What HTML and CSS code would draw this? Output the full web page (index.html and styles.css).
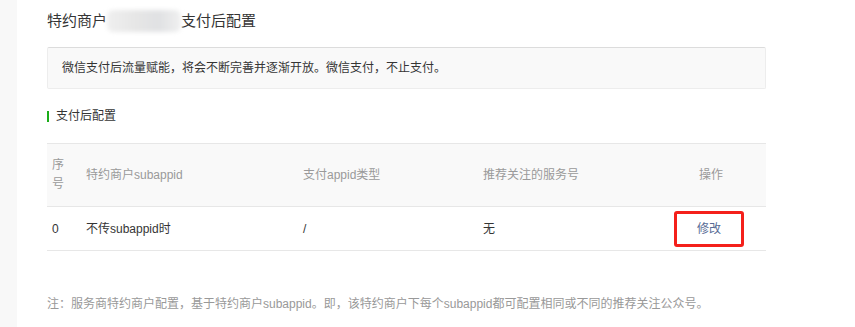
FILE: index.html
```html
<!DOCTYPE html>
<html lang="zh-CN">
<head>
  <meta charset="UTF-8" />
  <meta name="viewport" content="width=device-width, initial-scale=1.0"/>
  <title>支付后配置</title>
  <link rel="stylesheet" href="styles.css">
</head>
<body>
  <!-- left menu strip -->
  <aside class="side"></aside>

  <main class="content">
    <h2 class="page-title">特约商户<span class="masked"></span>支付后配置</h2>

    <div class="notice">微信支付后流量赋能，将会不断完善并逐渐开放。微信支付，不止支付。</div>

    <h3 class="section-title">支付后配置</h3>

    <table class="config-table">
      <thead>
        <tr>
          <th class="col-no">序号</th>
          <th class="col-sub">特约商户subappid</th>
          <th class="col-type">支付appid类型</th>
          <th class="col-follow">推荐关注的服务号</th>
          <th class="col-op">操作</th>
        </tr>
      </thead>
      <tbody>
        <tr>
          <td class="col-no">0</td>
          <td>不传subappid时</td>
          <td>/</td>
          <td>无</td>
          <td class="col-op"><a class="edit-link" href="#">修改</a></td>
        </tr>
      </tbody>
    </table>

    <p class="note">注：服务商特约商户配置，基于特约商户subappid。即，该特约商户下每个subappid都可配置相同或不同的推荐关注公众号。</p>
  </main>
</body>
</html>
```

FILE: styles.css
```css
body {
  margin: 0;
  font-family: "Liberation Sans", "Noto Sans CJK SC", sans-serif;
  font-size: 12px;
  color: #353535;
  background: #fff;
  display: flex;
  min-height: 100vh;
}

.side {
  width: 17px;
  flex-shrink: 0;
  background: #f8f8f8;
}

.content {
  padding-left: 30px;
  width: 719px;
}

.page-title {
  margin: 0 0 14px;
  padding-top: 9px;
  font-size: 15px;
  font-weight: normal;
  line-height: 24px;
  display: flex;
  align-items: center;
}

/* blurred merchant name */
.masked {
  display: inline-block;
  width: 74px;
  height: 22px;
  border-radius: 6px;
  background: linear-gradient(90deg, #efefef, #e6e6e6 40%, #e0e1e3 70%, #f0f0f0);
  filter: blur(2px);
}

.notice {
  background: #f9f9f9;
  border: 1px solid #ededed;
  border-top-color: #dcdcdc;
  border-radius: 2px;
  padding: 0 14px;
  line-height: 40px;
}

.section-title {
  margin: 19px 0 19px;
  font-size: 12px;
  font-weight: normal;
  line-height: 16px;
  display: flex;
  align-items: center;
}

.section-title::before {
  content: "";
  width: 2px;
  height: 11px;
  margin-right: 7px;
  background: #1aad19;
}

.config-table {
  width: 719px;
  border-collapse: collapse;
  table-layout: fixed;
}

.config-table th,
.config-table td {
  box-sizing: border-box;
  padding: 0 5px;
  text-align: left;
  font-weight: normal;
  border-top: 1px solid #e7e7e7;
  border-bottom: 1px solid #e7e7e7;
}

.config-table th {
  height: 63px;
  line-height: 19px;
  color: #9a9a9a;
  background: #f9f9f9;
}

.config-table td {
  height: 44px;
  line-height: 18px;
}

.col-no { width: 34px; padding-right: 6px !important; }
.col-sub { width: 217px; }
.col-type { width: 180px; }
.col-follow { width: 178px; }
.col-op { width: 110px; text-align: center !important; }

.edit-link {
  display: inline-block;
  box-sizing: border-box;
  width: 70px;
  height: 36px;
  line-height: 30px;
  margin-left: -4px;
  border: 3px solid #f4201b;
  border-radius: 3px;
  color: #576b95;
  text-decoration: none;
  vertical-align: middle;
}

.note {
  margin: 44px 0 0;
  line-height: 18px;
  color: #999;
}
```
